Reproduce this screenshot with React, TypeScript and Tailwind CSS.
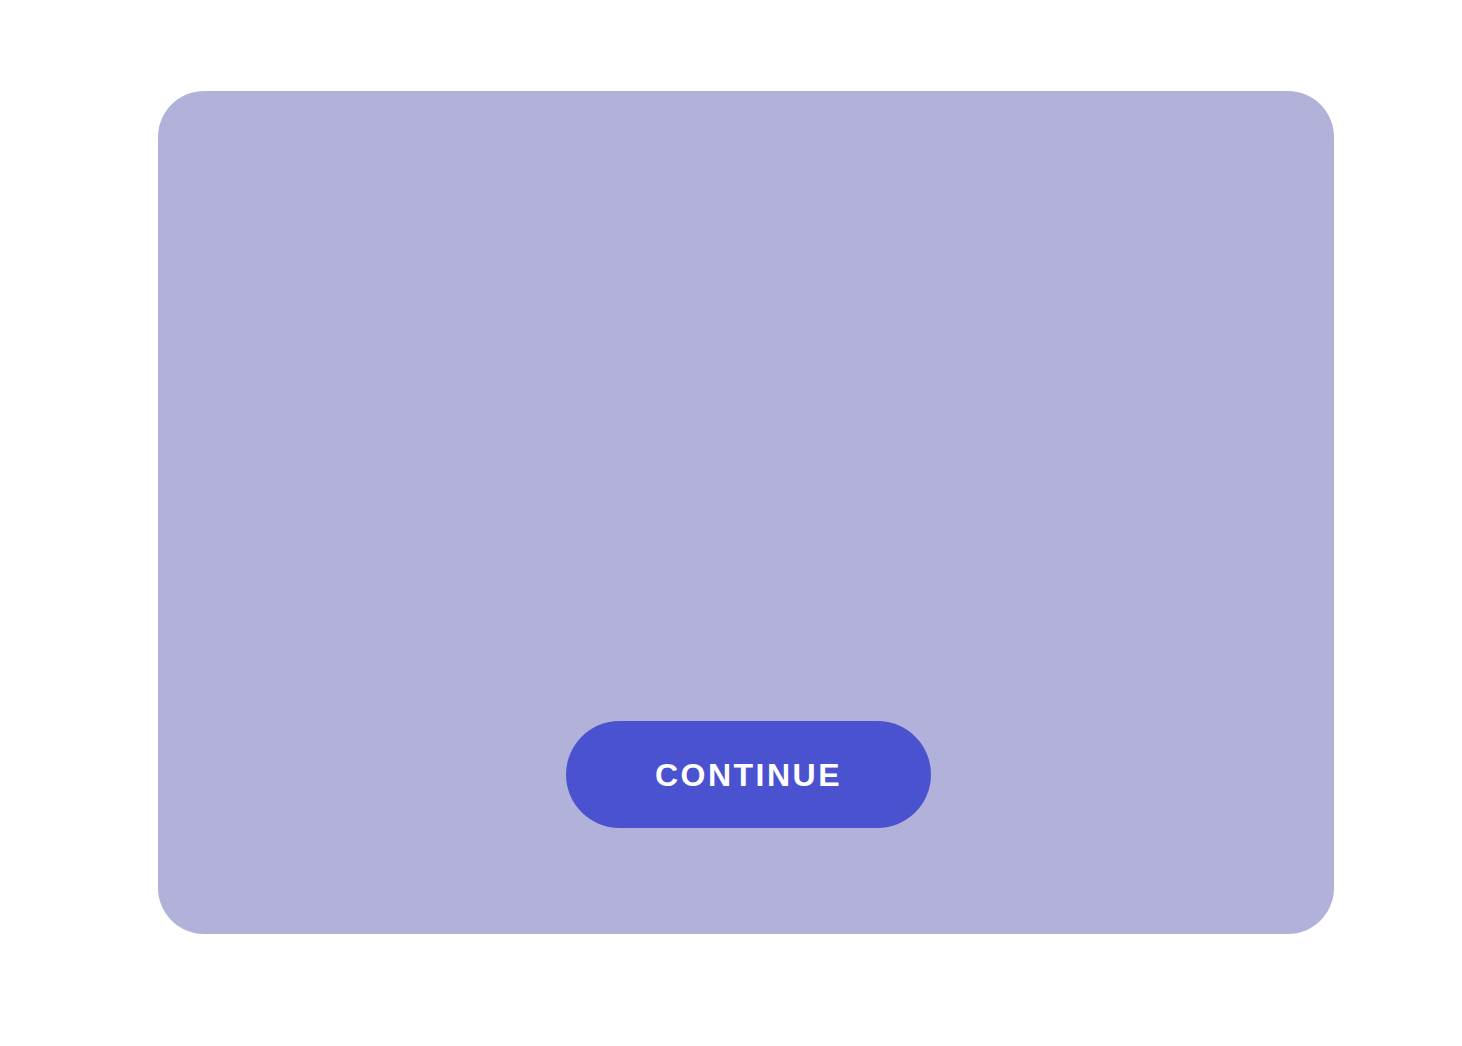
import React from "react";

export default function App() {
  return (
    <div className="w-[1462px] h-[1046px] bg-white pt-[91px] pl-[158px]">
      <div className="w-[1176px] h-[843px] rounded-[46px] bg-[#b1b1d9] flex flex-col items-center justify-end pb-[106px]">
        <button
          className="w-[365px] h-[107px] ml-[5px] rounded-full bg-[#4b52cf] text-white text-[32px] font-bold tracking-[2.5px] flex items-center justify-center"
          style={{ fontFamily: '"Liberation Sans", Arial, sans-serif' }}
        >
          CONTINUE
        </button>
      </div>
    </div>
  );
}
